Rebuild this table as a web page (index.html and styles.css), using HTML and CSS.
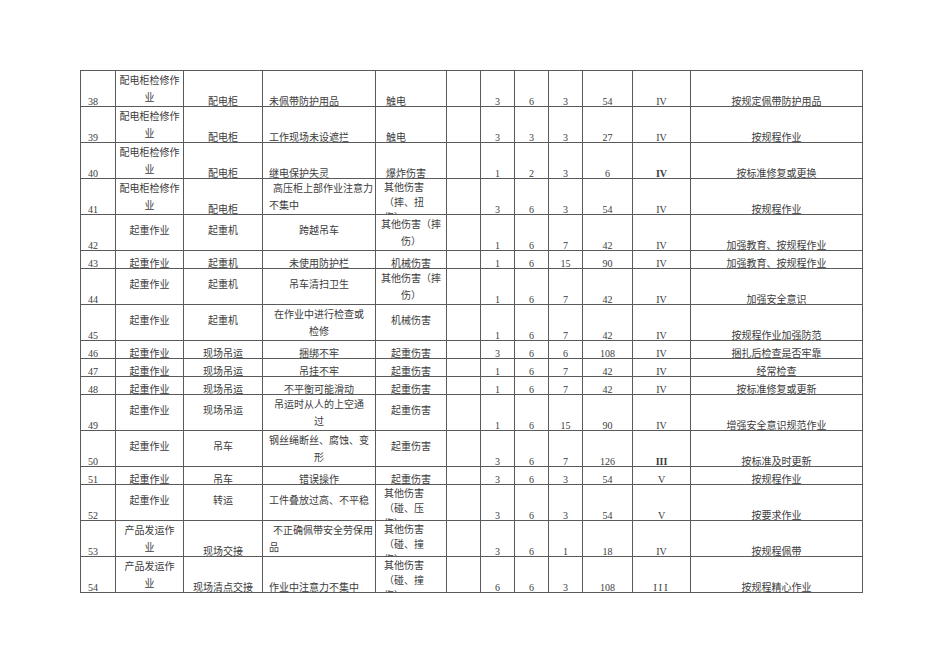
FILE: index.html
```html
<!DOCTYPE html>
<html lang="zh-CN">
<head>
<meta charset="utf-8">
<title>风险评价表</title>
<link rel="stylesheet" href="styles.css">
</head>
<body>
<table class="sheet">
  <colgroup>
    <col class="w1"><col class="w2"><col class="w3"><col class="w4"><col class="w5"><col class="w6">
    <col class="w7"><col class="w8"><col class="w9"><col class="w10"><col class="w11"><col class="w12">
  </colgroup>
  <tbody>
    <tr class="tall">
      <td><div class="c b no">38</div></td>
      <td><div class="c b2 ctr"><span>配电柜检修作</span><span>业</span></div></td>
      <td><div class="c b ctr">配电柜</div></td>
      <td><div class="c b lf">未佩带防护用品</div></td>
      <td><div class="c b lf2">触电</div></td>
      <td><div class="c"></div></td>
      <td><div class="c b ctr">3</div></td>
      <td><div class="c b ctr">6</div></td>
      <td><div class="c b ctr">3</div></td>
      <td><div class="c b ctr">54</div></td>
      <td><div class="c b ctr">IV</div></td>
      <td><div class="c b ctr">按规定佩带防护用品</div></td>
    </tr>
    <tr class="tall">
      <td><div class="c b no">39</div></td>
      <td><div class="c b2 ctr"><span>配电柜检修作</span><span>业</span></div></td>
      <td><div class="c b ctr">配电柜</div></td>
      <td><div class="c b lf">工作现场未设遮拦</div></td>
      <td><div class="c b lf2">触电</div></td>
      <td><div class="c"></div></td>
      <td><div class="c b ctr">3</div></td>
      <td><div class="c b ctr">3</div></td>
      <td><div class="c b ctr">3</div></td>
      <td><div class="c b ctr">27</div></td>
      <td><div class="c b ctr">IV</div></td>
      <td><div class="c b ctr">按规程作业</div></td>
    </tr>
    <tr class="tall">
      <td><div class="c b no">40</div></td>
      <td><div class="c b2 ctr"><span>配电柜检修作</span><span>业</span></div></td>
      <td><div class="c b ctr">配电柜</div></td>
      <td><div class="c b lf">继电保护失灵</div></td>
      <td><div class="c b lf2">爆炸伤害</div></td>
      <td><div class="c"></div></td>
      <td><div class="c b ctr">1</div></td>
      <td><div class="c b ctr">2</div></td>
      <td><div class="c b ctr">3</div></td>
      <td><div class="c b ctr">6</div></td>
      <td><div class="c b ctr strong">IV</div></td>
      <td><div class="c b ctr">按标准修复或更换</div></td>
    </tr>
    <tr class="tall">
      <td><div class="c b no">41</div></td>
      <td><div class="c b2 ctr"><span>配电柜检修作</span><span>业</span></div></td>
      <td><div class="c b ctr">配电柜</div></td>
      <td><div class="c b2 lf"><span class="ind">高压柜上部作业注意力</span><span>不集中</span></div></td>
      <td><div class="c t3 lf3"><span>其他伤害</span><span>（摔、扭</span><span>伤）</span></div></td>
      <td><div class="c"></div></td>
      <td><div class="c b ctr">3</div></td>
      <td><div class="c b ctr">6</div></td>
      <td><div class="c b ctr">3</div></td>
      <td><div class="c b ctr">54</div></td>
      <td><div class="c b ctr">IV</div></td>
      <td><div class="c b ctr">按规程作业</div></td>
    </tr>
    <tr class="tall">
      <td><div class="c b no">42</div></td>
      <td><div class="c m ctr">起重作业</div></td>
      <td><div class="c m ctr">起重机</div></td>
      <td><div class="c m ctr">跨越吊车</div></td>
      <td><div class="c b2 ctr"><span>其他伤害（摔</span><span>伤）</span></div></td>
      <td><div class="c"></div></td>
      <td><div class="c b ctr">1</div></td>
      <td><div class="c b ctr">6</div></td>
      <td><div class="c b ctr">7</div></td>
      <td><div class="c b ctr">42</div></td>
      <td><div class="c b ctr">IV</div></td>
      <td><div class="c b ctr">加强教育、按规程作业</div></td>
    </tr>
    <tr class="short">
      <td><div class="c b no">43</div></td>
      <td><div class="c b ctr">起重作业</div></td>
      <td><div class="c b ctr">起重机</div></td>
      <td><div class="c b ctr">未使用防护栏</div></td>
      <td><div class="c b ctr">机械伤害</div></td>
      <td><div class="c"></div></td>
      <td><div class="c b ctr">1</div></td>
      <td><div class="c b ctr">6</div></td>
      <td><div class="c b ctr">15</div></td>
      <td><div class="c b ctr">90</div></td>
      <td><div class="c b ctr">IV</div></td>
      <td><div class="c b ctr">加强教育、按规程作业</div></td>
    </tr>
    <tr class="tall">
      <td><div class="c b no">44</div></td>
      <td><div class="c m ctr">起重作业</div></td>
      <td><div class="c m ctr">起重机</div></td>
      <td><div class="c m ctr">吊车清扫卫生</div></td>
      <td><div class="c b2 ctr"><span>其他伤害（摔</span><span>伤）</span></div></td>
      <td><div class="c"></div></td>
      <td><div class="c b ctr">1</div></td>
      <td><div class="c b ctr">6</div></td>
      <td><div class="c b ctr">7</div></td>
      <td><div class="c b ctr">42</div></td>
      <td><div class="c b ctr">IV</div></td>
      <td><div class="c b ctr">加强安全意识</div></td>
    </tr>
    <tr class="tall">
      <td><div class="c b no">45</div></td>
      <td><div class="c m ctr">起重作业</div></td>
      <td><div class="c m ctr">起重机</div></td>
      <td><div class="c b2 ctr"><span>在作业中进行检查或</span><span>检修</span></div></td>
      <td><div class="c m ctr">机械伤害</div></td>
      <td><div class="c"></div></td>
      <td><div class="c b ctr">1</div></td>
      <td><div class="c b ctr">6</div></td>
      <td><div class="c b ctr">7</div></td>
      <td><div class="c b ctr">42</div></td>
      <td><div class="c b ctr">IV</div></td>
      <td><div class="c b ctr">按规程作业加强防范</div></td>
    </tr>
    <tr class="short">
      <td><div class="c b no">46</div></td>
      <td><div class="c b ctr">起重作业</div></td>
      <td><div class="c b ctr">现场吊运</div></td>
      <td><div class="c b ctr">捆绑不牢</div></td>
      <td><div class="c b ctr">起重伤害</div></td>
      <td><div class="c"></div></td>
      <td><div class="c b ctr">3</div></td>
      <td><div class="c b ctr">6</div></td>
      <td><div class="c b ctr">6</div></td>
      <td><div class="c b ctr">108</div></td>
      <td><div class="c b ctr">IV</div></td>
      <td><div class="c b ctr">捆扎后检查是否牢靠</div></td>
    </tr>
    <tr class="short">
      <td><div class="c b no">47</div></td>
      <td><div class="c b ctr">起重作业</div></td>
      <td><div class="c b ctr">现场吊运</div></td>
      <td><div class="c b ctr">吊挂不牢</div></td>
      <td><div class="c b ctr">起重伤害</div></td>
      <td><div class="c"></div></td>
      <td><div class="c b ctr">1</div></td>
      <td><div class="c b ctr">6</div></td>
      <td><div class="c b ctr">7</div></td>
      <td><div class="c b ctr">42</div></td>
      <td><div class="c b ctr">IV</div></td>
      <td><div class="c b ctr">经常检查</div></td>
    </tr>
    <tr class="short">
      <td><div class="c b no">48</div></td>
      <td><div class="c b ctr">起重作业</div></td>
      <td><div class="c b ctr">现场吊运</div></td>
      <td><div class="c b ctr">不平衡可能滑动</div></td>
      <td><div class="c b ctr">起重伤害</div></td>
      <td><div class="c"></div></td>
      <td><div class="c b ctr">1</div></td>
      <td><div class="c b ctr">6</div></td>
      <td><div class="c b ctr">7</div></td>
      <td><div class="c b ctr">42</div></td>
      <td><div class="c b ctr">IV</div></td>
      <td><div class="c b ctr">按标准修复或更新</div></td>
    </tr>
    <tr class="tall">
      <td><div class="c b no">49</div></td>
      <td><div class="c m ctr">起重作业</div></td>
      <td><div class="c m ctr">现场吊运</div></td>
      <td><div class="c b2 ctr"><span>吊运时从人的上空通</span><span>过</span></div></td>
      <td><div class="c m ctr">起重伤害</div></td>
      <td><div class="c"></div></td>
      <td><div class="c b ctr">1</div></td>
      <td><div class="c b ctr">6</div></td>
      <td><div class="c b ctr">15</div></td>
      <td><div class="c b ctr">90</div></td>
      <td><div class="c b ctr">IV</div></td>
      <td><div class="c b ctr">增强安全意识规范作业</div></td>
    </tr>
    <tr class="tall">
      <td><div class="c b no">50</div></td>
      <td><div class="c m ctr">起重作业</div></td>
      <td><div class="c m ctr">吊车</div></td>
      <td><div class="c b2 ctr"><span>钢丝绳断丝、腐蚀、变</span><span>形</span></div></td>
      <td><div class="c m ctr">起重伤害</div></td>
      <td><div class="c"></div></td>
      <td><div class="c b ctr">3</div></td>
      <td><div class="c b ctr">6</div></td>
      <td><div class="c b ctr">7</div></td>
      <td><div class="c b ctr">126</div></td>
      <td><div class="c b ctr strong">III</div></td>
      <td><div class="c b ctr">按标准及时更新</div></td>
    </tr>
    <tr class="short">
      <td><div class="c b no">51</div></td>
      <td><div class="c b ctr">起重作业</div></td>
      <td><div class="c b ctr">吊车</div></td>
      <td><div class="c b ctr">错误操作</div></td>
      <td><div class="c b ctr">起重伤害</div></td>
      <td><div class="c"></div></td>
      <td><div class="c b ctr">3</div></td>
      <td><div class="c b ctr">6</div></td>
      <td><div class="c b ctr">3</div></td>
      <td><div class="c b ctr">54</div></td>
      <td><div class="c b ctr">V</div></td>
      <td><div class="c b ctr">按规程作业</div></td>
    </tr>
    <tr class="tall">
      <td><div class="c b no">52</div></td>
      <td><div class="c m ctr">起重作业</div></td>
      <td><div class="c m ctr">转运</div></td>
      <td><div class="c m lf">工件叠放过高、不平稳</div></td>
      <td><div class="c t3 lf3"><span>其他伤害</span><span>（碰、压</span><span>伤）</span></div></td>
      <td><div class="c"></div></td>
      <td><div class="c b ctr">3</div></td>
      <td><div class="c b ctr">6</div></td>
      <td><div class="c b ctr">3</div></td>
      <td><div class="c b ctr">54</div></td>
      <td><div class="c b ctr">V</div></td>
      <td><div class="c b ctr">按要求作业</div></td>
    </tr>
    <tr class="tall">
      <td><div class="c b no">53</div></td>
      <td><div class="c b2 ctr"><span>产品发运作</span><span>业</span></div></td>
      <td><div class="c b ctr">现场交接</div></td>
      <td><div class="c b2 lf"><span class="ind">不正确佩带安全劳保用</span><span>品</span></div></td>
      <td><div class="c t3 lf3"><span>其他伤害</span><span>（碰、撞</span><span>伤）</span></div></td>
      <td><div class="c"></div></td>
      <td><div class="c b ctr">3</div></td>
      <td><div class="c b ctr">6</div></td>
      <td><div class="c b ctr">1</div></td>
      <td><div class="c b ctr">18</div></td>
      <td><div class="c b ctr">IV</div></td>
      <td><div class="c b ctr">按规程佩带</div></td>
    </tr>
    <tr class="tall">
      <td><div class="c b no">54</div></td>
      <td><div class="c b2 ctr"><span>产品发运作</span><span>业</span></div></td>
      <td><div class="c b ctr">现场清点交接</div></td>
      <td><div class="c b lf">作业中注意力不集中</div></td>
      <td><div class="c t3 lf3"><span>其他伤害</span><span>（碰、撞</span><span>伤）</span></div></td>
      <td><div class="c"></div></td>
      <td><div class="c b ctr">6</div></td>
      <td><div class="c b ctr">6</div></td>
      <td><div class="c b ctr">3</div></td>
      <td><div class="c b ctr">108</div></td>
      <td><div class="c b ctr spaced">III</div></td>
      <td><div class="c b ctr">按规程精心作业</div></td>
    </tr>
  </tbody>
</table>
</body>
</html>
```
FILE: styles.css
```css
html, body {
  margin: 0;
  padding: 0;
  background: #ffffff;
}

body {
  padding: 70px 0 0 80px;
  font-family: "Liberation Serif", "Noto Sans CJK SC", serif;
  font-size: 10px;
  color: #3c3c3c;
}

.sheet {
  border-collapse: collapse;
  table-layout: fixed;
  width: 783px;
}

.w1 { width: 35px; }
.w2 { width: 68px; }
.w3 { width: 79px; }
.w4 { width: 113px; }
.w5 { width: 71px; }
.w6 { width: 34px; }
.w7 { width: 34px; }
.w8 { width: 34px; }
.w9 { width: 34px; }
.w10 { width: 50px; }
.w11 { width: 58px; }
.w12 { width: 172px; }

.sheet td {
  border: 1px solid #5a5a5a;
  padding: 0;
  vertical-align: top;
}

.c {
  box-sizing: border-box;
  display: flex;
  flex-direction: column;
  overflow: hidden;
  white-space: nowrap;
}

.tall .c { height: 35px; }
.short .c { height: 17px; }

.c span { display: block; }

/* vertical placement */
.b { justify-content: flex-end; line-height: 9px; }
.b2 { justify-content: flex-end; line-height: 17px; }
.m { justify-content: center; line-height: 14px; padding-bottom: 3px; }
.t3 { justify-content: flex-start; line-height: 15px; padding-top: 1px; }

/* horizontal placement */
.ctr { text-align: center; }
.no { text-align: left; padding-left: 7px; }
.lf { text-align: left; padding-left: 6px; }
.lf2 { text-align: left; padding-left: 10px; }
.lf3 { text-align: left; padding-left: 8px; }
.ind { padding-left: 4px; }

.strong { font-weight: bold; }
.spaced { letter-spacing: 2px; }
```
